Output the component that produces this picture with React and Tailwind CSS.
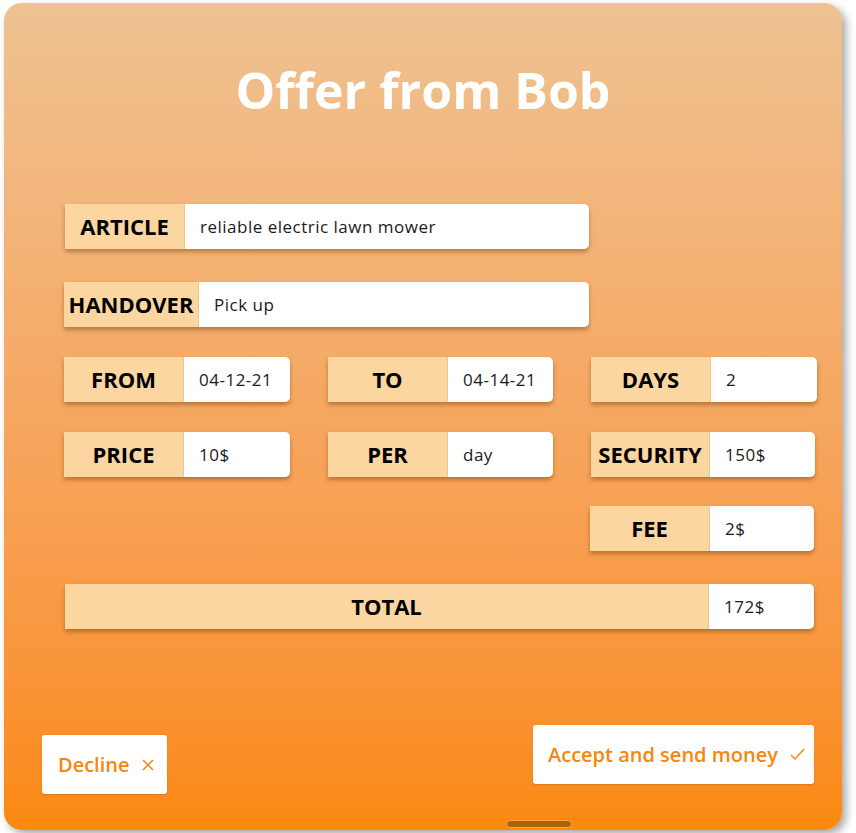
import React from "react";

const sans = { fontFamily: '"Open Sans", "Noto Sans", sans-serif' };

function Field({ label, value, labelW = "w-[120px]", width }) {
  return (
    <div
      className={`flex h-[45px] rounded-r-[5px] shadow-[0_3px_4px_rgba(120,60,0,0.45)] ${width}`}
    >
      <div
        className={`${labelW} shrink-0 bg-[#fbd6a1] flex items-center justify-center text-[22px] font-bold text-black border-r border-[#f0c58a]`}
      >
        {label}
      </div>
      <div className="flex-1 bg-white rounded-r-[5px] flex items-center pl-[15px] text-[17px] tracking-[0.5px] text-[#1a1a1a]">
        {value}
      </div>
    </div>
  );
}

export default function App() {
  return (
    <div className="w-[856px] h-[833px] bg-white pt-[3px] pl-[4px]" style={sans}>
      <div className="relative w-[838px] h-[827px] rounded-[18px] bg-gradient-to-b from-[#eec292] to-[#fb890a] shadow-[4px_4px_8px_rgba(0,0,0,0.35)] flex flex-col">
        <h1 className="mt-[56px] h-[62px] leading-[62px] text-center text-white text-[50px] font-bold">
          Offer from Bob
        </h1>

        <div className="mt-[83px] pl-[61px]">
          <Field label="ARTICLE" value="reliable electric lawn mower" width="w-[524px]" />
        </div>
        <div className="mt-[33px] pl-[60px]">
          <Field label="HANDOVER" value="Pick up" labelW="w-[135px]" width="w-[525px]" />
        </div>

        <div className="mt-[30px] pl-[60px] flex gap-[38px]">
          <Field label="FROM" value="04-12-21" width="w-[226px]" />
          <Field label="TO" value="04-14-21" width="w-[225px]" />
          <Field label="DAYS" value="2" width="w-[226px]" />
        </div>
        <div className="mt-[30px] pl-[60px] flex gap-[38px]">
          <Field label="PRICE" value="10$" width="w-[226px]" />
          <Field label="PER" value="day" width="w-[225px]" />
          <Field label="SECURITY" value="150$" labelW="w-[119px]" width="w-[224px]" />
        </div>
        <div className="mt-[29px] pl-[586px] flex">
          <Field label="FEE" value="2$" width="w-[224px]" />
        </div>
        <div className="mt-[33px] pl-[61px] flex">
          <Field label="TOTAL" value="172$" labelW="w-[644px]" width="w-[749px]" />
        </div>

        <div className="mt-[96px] flex justify-between items-start pl-[38px] pr-[28px]">
          <button className="mt-[10px] h-[59px] w-[125px] bg-white rounded-[3px] flex items-center pl-[16px] gap-[12px] text-[#f5870e] text-[20px] font-semibold shadow-[0_1px_2px_rgba(0,0,0,0.15)]">
            <span>Decline</span>
            <svg width="12" height="12" viewBox="0 0 12 12" className="mt-[1px]">
              <path d="M1 1 L11 11 M11 1 L1 11" stroke="#f5870e" strokeWidth="1.5" fill="none" />
            </svg>
          </button>
          <button className="h-[59px] w-[281px] bg-white rounded-[3px] flex items-center pl-[15px] gap-[12px] text-[#f5870e] text-[20px] font-semibold shadow-[0_1px_2px_rgba(0,0,0,0.15)]">
            <span>Accept and send money</span>
            <svg width="15" height="12" viewBox="0 0 15 12" className="-mt-[2px]">
              <path d="M1 7 L5 11 L14 1" stroke="#f5870e" strokeWidth="1.4" fill="none" />
            </svg>
          </button>
        </div>

        <div className="absolute left-[502px] bottom-[2px] w-[66px] h-[8px] rounded-full bg-[#b06203] border border-[#f3a65a]" />
      </div>
    </div>
  );
}
